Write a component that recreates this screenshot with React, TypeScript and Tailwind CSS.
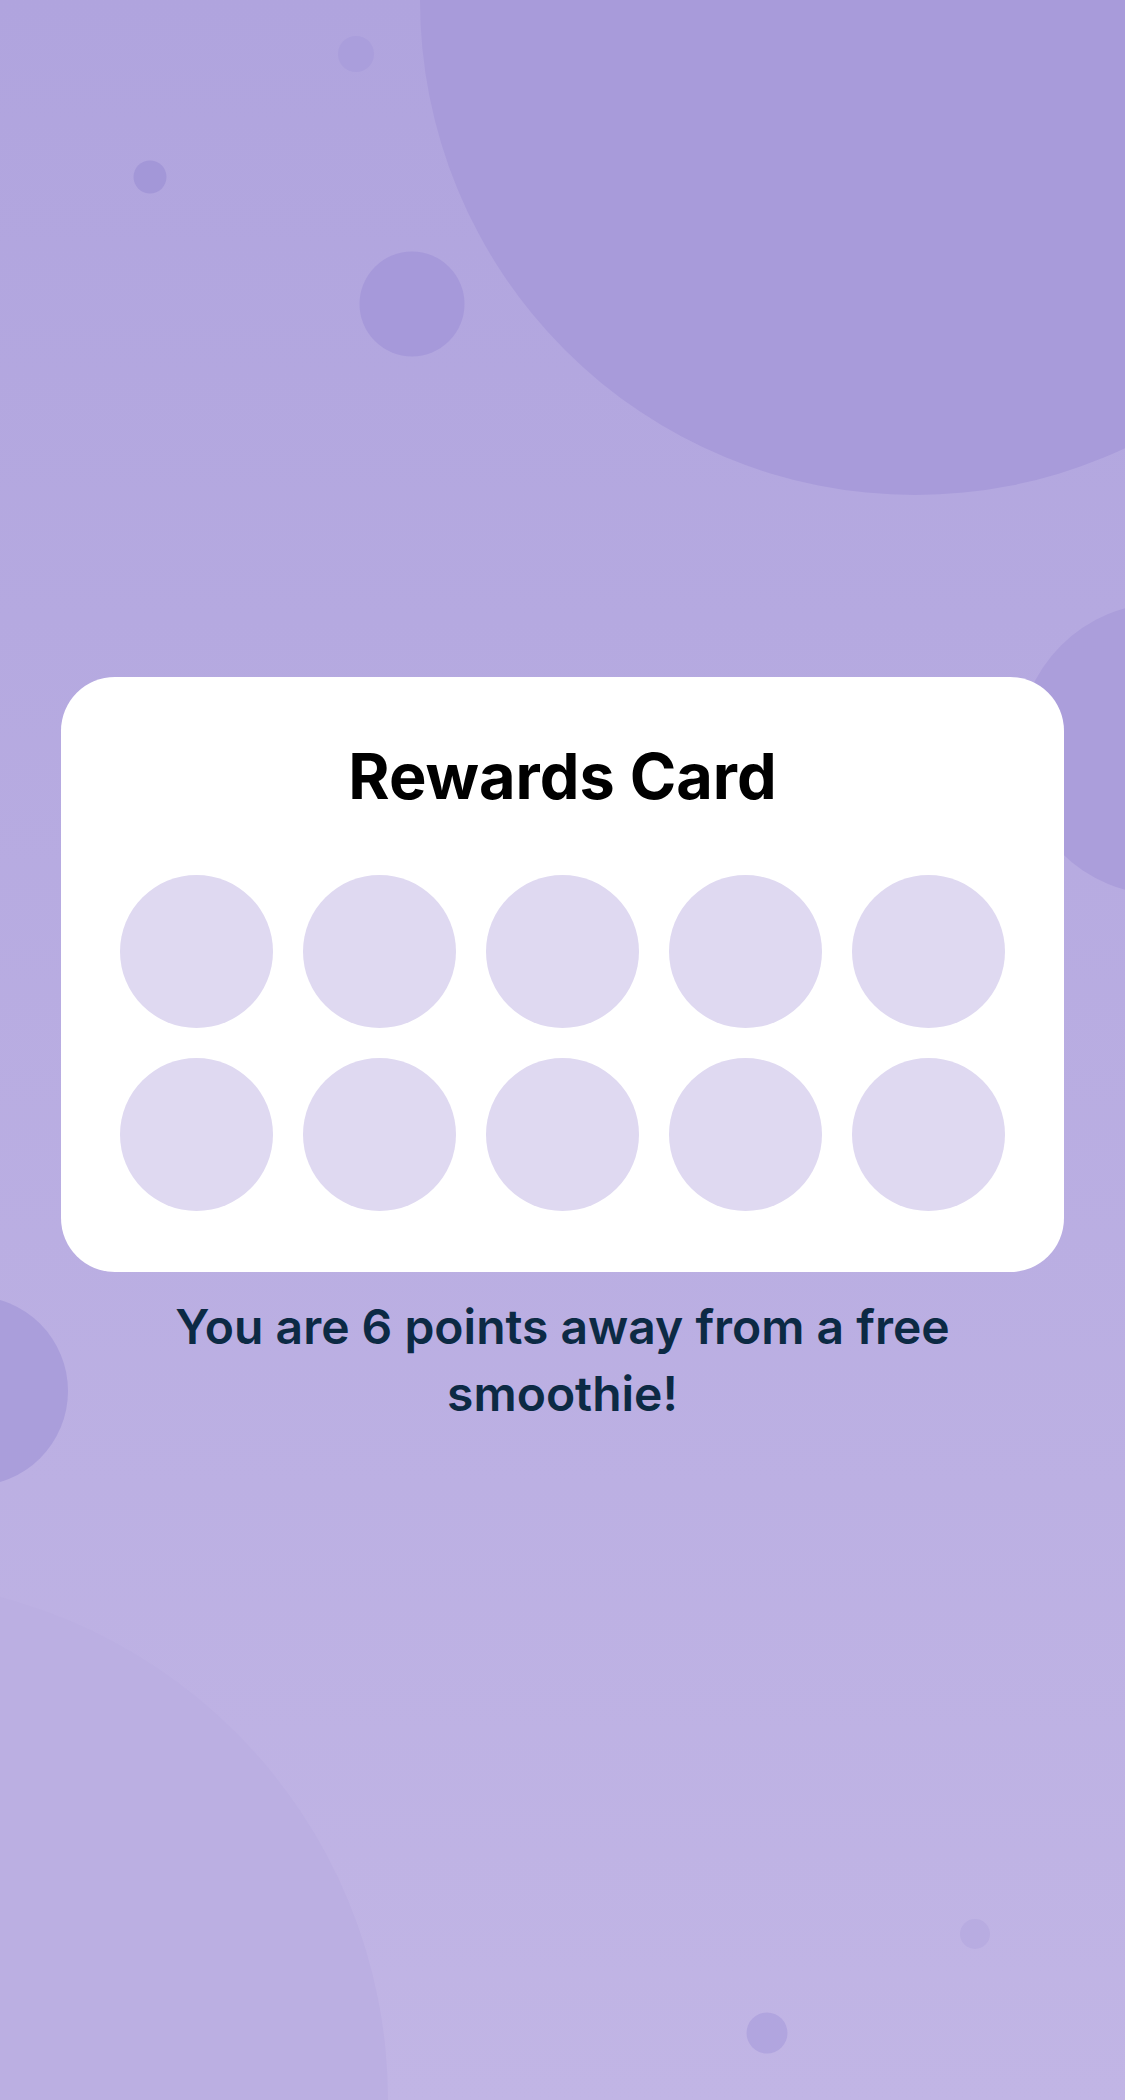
import React from "react";

const bubbles: { x: number; y: number; r: number; c: string }[] = [
  { x: 915, y: 0, r: 495, c: "#a89bda" },
  { x: 356, y: 54, r: 18, c: "#aa9edc" },
  { x: 150, y: 177, r: 16.5, c: "#a397d8" },
  { x: 412, y: 304, r: 52.5, c: "#a699da" },
  { x: 1164, y: 749, r: 146, c: "#ab9edb" },
  { x: -27, y: 1391, r: 95, c: "#aa9edb" },
  { x: -132, y: 2100, r: 520, c: "#bbafe2" },
  { x: 975, y: 1934, r: 15, c: "#b8ace1" },
  { x: 767, y: 2033, r: 20.5, c: "#b1a5df" },
];

export default function App() {
  return (
    <div
      className="relative h-[2100px] w-full overflow-hidden bg-gradient-to-b from-[#b0a4de] to-[#c1b5e5]"
      style={{ fontFamily: "Inter, 'Noto Sans', sans-serif" }}
    >
      <svg
        className="absolute inset-0 h-full w-full"
        width="1125"
        height="2100"
        viewBox="0 0 1125 2100"
      >
        {bubbles.map((b, i) => (
          <circle key={i} cx={b.x} cy={b.y} r={b.r} fill={b.c} />
        ))}
      </svg>

      <div className="relative flex h-full flex-col items-center justify-center px-[61px] pt-[4px]">
        <div className="w-full rounded-[54px] bg-white px-[59px] pb-[61px] pt-[62px]">
          <h1 className="text-center text-[63px] font-bold leading-[74px] text-black">
            Rewards Card
          </h1>
          <div className="mt-[62px] grid grid-cols-5 gap-[30px]">
            {Array.from({ length: 10 }).map((_, i) => (
              <div
                key={i}
                className="h-[153px] w-[153px] rounded-full bg-[#dfd9f1]"
              />
            ))}
          </div>
        </div>
        <p className="mt-[21px] max-w-[820px] text-center text-[48px] font-semibold leading-[67px] text-[#0c2a44]">
          You are 6 points away from a free smoothie!
        </p>
      </div>
    </div>
  );
}
